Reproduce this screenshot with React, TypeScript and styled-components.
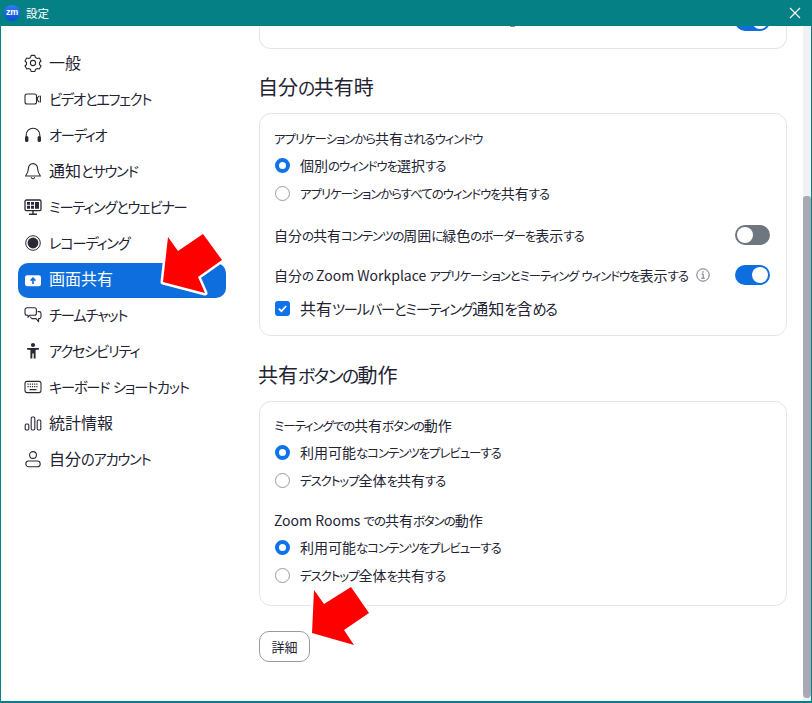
import React from "react";
import styled, { createGlobalStyle } from "styled-components";

const Global = createGlobalStyle`
  html, body { margin: 0; padding: 0; background: #fff; }
  body { font-family: "Noto Sans CJK JP", "Noto Sans", sans-serif; color: #232333; }
  * { box-sizing: border-box; }
`;

const Window = styled.div`
  position: relative;
  width: 812px;
  height: 703px;
  display: flex;
  flex-direction: column;
  background: #fff;
  border-left: 1px solid #058185;
  border-right: 1px solid #058185;
  border-bottom: 2px solid #058185;
  overflow: hidden;
`;

const TitleBar = styled.header`
  height: 26px;
  margin: 0 -1px;
  flex: none;
  background: #058185;
  display: flex;
  align-items: center;
  padding: 0 10px 0 4px;
  color: #fff;
`;

const Logo = styled.div`
  width: 16px;
  height: 16px;
  border-radius: 50%;
  background: linear-gradient(180deg, #2d7cf6, #0b4fd0);
  color: #fff;
  font: 700 9px/15px "Liberation Sans", sans-serif;
  text-align: center;
  letter-spacing: -0.3px;
`;

const TitleText = styled.span`
  margin-left: 6px;
  font-size: 11.5px;
  flex: 1;
`;

const Body = styled.div`
  flex: 1;
  min-height: 0;
  display: flex;
`;

const Sidebar = styled.nav`
  width: 258px;
  flex: none;
  padding: 19px 0 0 17px;
  display: flex;
  flex-direction: column;
`;

const NavRow = styled.div<{ $active?: boolean }>`
  width: 208px;
  height: ${(p) => (p.$active ? 35 : 36)}px;
  margin: ${(p) => (p.$active ? "2px 0 -1px" : "0")};
  display: flex;
  align-items: center;
  gap: 7px;
  padding-left: 6px;
  font-size: 16px;
  border-radius: 10px;
  color: ${(p) => (p.$active ? "#fff" : "#232333")};
  background: ${(p) => (p.$active ? "#0e6ede" : "transparent")};
  white-space: nowrap;
`;

const NavLabel = styled.span<{ $active?: boolean }>`
  padding-bottom: ${(p) => (p.$active ? 5 : 2)}px;
`;

const IconSlot = styled.span`
  width: 18px;
  height: 18px;
  display: flex;
  flex: none;
  color: #2a2a36;
`;

const Main = styled.main`
  flex: none;
  width: 528px;
`;

const ClippedCard = styled.div`
  height: 23px;
  border: 1px solid #e4e4ec;
  border-top: none;
  border-radius: 0 0 12px 12px;
  overflow: hidden;
  display: flex;
  justify-content: flex-end;
  padding-right: 16px;
  position: relative;
`;

const ClippedMark = styled.span`
  position: absolute;
  left: 250px;
  top: 0;
  width: 5px;
  height: 1px;
  background: #8a8a94;
`;

const ClippedToggle = styled.div`
  width: 35px;
  height: 20px;
  margin-top: -15px;
  border-radius: 10px;
  background: #0e6ede;
  position: relative;
  &::after {
    content: "";
    position: absolute;
    right: 2px;
    top: 2px;
    width: 16px;
    height: 16px;
    border-radius: 50%;
    background: #fff;
  }
`;

const Heading = styled.h2`
  margin: 0 0 0 -1px;
  font-size: 20px;
  font-weight: 400;
  line-height: 28px;
  color: #232333;
`;

const Section = styled.section<{ $top: number }>`
  margin-top: ${(p) => p.$top}px;
  display: flex;
  flex-direction: column;
  gap: 12px;
`;

const Card = styled.div<{ $padTop: number; $pad: number }>`
  border: 1px solid #e4e4ec;
  border-radius: 12px;
  padding: ${(p) => p.$padTop}px 16px ${(p) => p.$pad}px 14px;
  display: flex;
  flex-direction: column;
`;

const Label = styled.div<{ $top?: number }>`
  font-size: 14px;
  line-height: 20px;
  height: 20px;
  margin-top: ${(p) => p.$top ?? 0}px;
`;

const OptionRow = styled.div<{ $top?: number; $large?: boolean }>`
  display: flex;
  align-items: center;
  gap: 10px;
  font-size: ${(p) => (p.$large ? 16 : 14)}px;
  height: 20px;
  padding-left: 1px;
  margin-top: ${(p) => p.$top ?? 8}px;
  white-space: nowrap;
`;

const Radio = styled.span<{ $on?: boolean }>`
  width: 15px;
  height: 15px;
  flex: none;
  border-radius: 50%;
  background: #fff;
  border: ${(p) => (p.$on ? "4px solid #0e72ed" : "1px solid #9a9aa5")};
`;

const Check = styled.span`
  width: 15px;
  height: 15px;
  flex: none;
  border-radius: 3px;
  background: #0e72ed;
  display: flex;
  align-items: center;
  justify-content: center;
`;

const ToggleRow = styled.div<{ $top: number }>`
  display: flex;
  align-items: center;
  justify-content: space-between;
  height: 20px;
  margin-top: ${(p) => p.$top}px;
  font-size: 14px;
  white-space: nowrap;
`;

const ToggleLabel = styled.div`
  display: flex;
  align-items: center;
  gap: 8px;
`;

const Toggle = styled.span<{ $on?: boolean }>`
  width: 35px;
  height: 20px;
  flex: none;
  border-radius: 10px;
  background: ${(p) => (p.$on ? "#0e6ede" : "#6e7680")};
  position: relative;
  &::after {
    content: "";
    position: absolute;
    top: 2px;
    left: ${(p) => (p.$on ? "17px" : "2px")};
    width: 16px;
    height: 16px;
    border-radius: 50%;
    background: #fff;
  }
`;

const DetailButton = styled.button`
  display: block;
  margin-top: 25px;
  width: 51px;
  height: 31px;
  padding: 0;
  background: #fff;
  border: 1px solid #9a9aa5;
  border-radius: 10px;
  font: 400 13px "Noto Sans CJK JP", sans-serif;
  color: #232333;
`;

const ScrollTrack = styled.div`
  position: absolute;
  top: 26px;
  right: 0;
  bottom: 0;
  width: 8px;
  background: #f0f0f5;
`;

const ScrollThumb = styled.div`
  position: absolute;
  top: 170px;
  bottom: 3px;
  left: 0;
  right: 0;
  border-radius: 3px 3px 4px 4px;
  background: #a9a9b3;
`;

const Overlay = styled.svg`
  position: absolute;
  left: -1px;
  top: 0;
  width: 812px;
  height: 703px;
  pointer-events: none;
`;

const ArrowShape = styled.polygon`
  fill: #ff0000;
  stroke: #fff;
  stroke-width: 5px;
  stroke-linejoin: round;
  paint-order: stroke;
`;

const Kana = styled.span`
  font-feature-settings: "palt";
  font-size: 0.89em;
  letter-spacing: -0.085em;
`;

const Jp: React.FC<{ t: string }> = ({ t }) => (
  <>
    {t.split(/([\u3040-\u30ff]+)/).map((part, i) =>
      /[\u3040-\u30ff]/.test(part) ? <Kana key={i}>{part}</Kana> : <span key={i}>{part}</span>
    )}
  </>
);

const S = { fill: "none", stroke: "currentColor", strokeWidth: 1.1, strokeLinecap: "round", strokeLinejoin: "round" } as const;

const Ico: React.FC<{ children: React.ReactNode }> = ({ children }) => (
  <IconSlot>
    <svg width="18" height="18" viewBox="0 0 18 18">{children}</svg>
  </IconSlot>
);

const icons: Record<string, React.ReactNode> = {
  gear: (
    <g {...S}>
      <path d="M7.2 1.4h3.6l.6 2 1.9 1.1 2-.5 1.7 3-1.5 1.5 0 2 1.5 1.5-1.7 3-2-.5-1.9 1.1-.6 2H7.2l-.6-2-1.9-1.1-2 .5-1.7-3 1.5-1.5 0-2L1 7l1.7-3 2 .5 1.9-1.1z" />
      <circle cx="9" cy="9" r="2.6" />
    </g>
  ),
  video: (
    <g {...S}>
      <rect x="1" y="4" width="11.5" height="10" rx="2" />
      <path d="M15 6.2l-1.6 1.6v2.4l1.6 1.6M16.4 6v6" />
    </g>
  ),
  audio: (
    <g>
      <path d="M2.2 11V9a6.8 6.8 0 0 1 13.6 0v2" {...S} />
      <rect x="1" y="10" width="3.4" height="6" rx="1.6" fill="currentColor" />
      <rect x="13.6" y="10" width="3.4" height="6" rx="1.6" fill="currentColor" />
    </g>
  ),
  bell: (
    <g {...S}>
      <path d="M9 1.6c-2.9 0-4.6 2.2-4.6 5 0 3.4-1.1 5.2-2.8 7.4h14.8c-1.7-2.2-2.8-4-2.8-7.4 0-2.8-1.7-5-4.6-5z" />
      <path d="M7.4 15.6a1.7 1.7 0 0 0 3.2 0" />
    </g>
  ),
  meeting: (
    <g>
      <rect x="1" y="2" width="16" height="10.6" rx="1.4" fill="none" stroke="currentColor" strokeWidth="1.3" />
      <path d="M3 4h3v2.8H3zM7 4h3v2.8H7zM11 4h4v6.8h-4zM3 7.8h3v3H3zM7 7.8h3v3H7z" fill="currentColor" />
      <path d="M9 13v3M5 16.2h8" fill="none" stroke="currentColor" strokeWidth="1.4" />
    </g>
  ),
  record: (
    <g>
      <circle cx="9" cy="9" r="7.3" fill="none" stroke="currentColor" strokeWidth="1" />
      <circle cx="9" cy="9" r="5.4" fill="currentColor" />
    </g>
  ),
  share: (
    <g>
      <rect x="1" y="3.2" width="16" height="11" rx="2.2" fill="#fff" />
      <path d="M9 12V6.4M6.6 8.6L9 6.2l2.4 2.4" fill="none" stroke="#0e6ede" strokeWidth="1.6" />
    </g>
  ),
  chat: (
    <g {...S}>
      <path d="M3 1.8h7.4a2 2 0 0 1 2 2v3.4a2 2 0 0 1-2 2H6l-2 2V9.2H3a2 2 0 0 1-2-2V3.8a2 2 0 0 1 2-2z" />
      <path d="M14 5.6h1.2a1.8 1.8 0 0 1 1.8 1.8v3.4a1.8 1.8 0 0 1-1.8 1.8h-.6v3l-2.6-3H8.2A2 2 0 0 1 6.6 11" />
    </g>
  ),
  access: (
    <g fill="currentColor">
      <circle cx="9" cy="3" r="2.1" />
      <path d="M3 6h12v1.4l-3.4.7V16.6H9.7v-5.2H8.3v5.2H6.4V8.1L3 7.4z" />
    </g>
  ),
  keyboard: (
    <g>
      <rect x="1" y="3.4" width="16" height="11.2" rx="2" fill="none" stroke="currentColor" strokeWidth="1.1" />
      <path d="M3.5 6.2h11M3.5 8.6h11" stroke="currentColor" strokeWidth="1.3" strokeDasharray="1.2 1" fill="none" />
      <path d="M5.5 11.6h7" stroke="currentColor" strokeWidth="1.3" fill="none" />
    </g>
  ),
  stats: (
    <g {...S}>
      <rect x="1.2" y="10" width="3.6" height="6" rx="1.2" />
      <rect x="7.2" y="3" width="3.6" height="13" rx="1.2" />
      <rect x="13.2" y="6" width="3.6" height="10" rx="1.2" />
    </g>
  ),
  account: (
    <g {...S}>
      <circle cx="9" cy="5" r="3.4" />
      <rect x="1.8" y="11" width="14.4" height="5.8" rx="2.9" />
    </g>
  ),
};

const navItems = [
  ["gear", "一般"],
  ["video", "ビデオとエフェクト"],
  ["audio", "オーディオ"],
  ["bell", "通知とサウンド"],
  ["meeting", "ミーティングとウェビナー"],
  ["record", "レコーディング"],
  ["share", "画面共有"],
  ["chat", "チームチャット"],
  ["access", "アクセシビリティ"],
  ["keyboard", "キーボード ショートカット"],
  ["stats", "統計情報"],
  ["account", "自分のアカウント"],
];

const Radios: React.FC<{ a: string; b: string }> = ({ a, b }) => (
  <>
    <OptionRow $top={7}>
      <Radio $on />
      <span><Jp t={a} /></span>
    </OptionRow>
    <OptionRow>
      <Radio />
      <span><Jp t={b} /></span>
    </OptionRow>
  </>
);

export default function App() {
  return (
    <Window>
      <Global />
      <TitleBar>
        <Logo>zm</Logo>
        <TitleText>設定</TitleText>
        <svg width="14" height="14" viewBox="0 0 14 14">
          <path d="M2 2l10 10M12 2L2 12" stroke="#fff" strokeWidth="1.2" fill="none" />
        </svg>
      </TitleBar>
      <Body>
        <Sidebar>
          {navItems.map(([icon, text]) => (
            <NavRow key={icon} $active={icon === "share"}>
              <Ico>{icons[icon]}</Ico>
              <NavLabel $active={icon === "share"}><Jp t={text} /></NavLabel>
            </NavRow>
          ))}
        </Sidebar>
        <Main>
          <ClippedCard>
            <ClippedMark />
            <ClippedToggle />
          </ClippedCard>
          <Section $top={24}>
            <Heading><Jp t="自分の共有時" /></Heading>
            <Card $padTop={14} $pad={17}>
              <Label><Jp t="アプリケーションから共有されるウィンドウ" /></Label>
              <Radios a="個別のウィンドウを選択する" b="アプリケーションからすべてのウィンドウを共有する" />
              <ToggleRow $top={22}>
                <span><Jp t="自分の共有コンテンツの周囲に緑色のボーダーを表示する" /></span>
                <Toggle />
              </ToggleRow>
              <ToggleRow $top={20}>
                <ToggleLabel>
                  <span><Jp t="自分の Zoom Workplace アプリケーションとミーティング ウィンドウを表示する" /></span>
                  <svg width="14" height="14" viewBox="0 0 14 14">
                    <circle cx="7" cy="7" r="6.2" fill="none" stroke="#6e7680" strokeWidth="1" />
                    <path d="M5.6 6h1.6v4M5.2 10.2h3.6" fill="none" stroke="#6e7680" strokeWidth="1" />
                    <circle cx="7" cy="4" r="0.8" fill="#6e7680" />
                  </svg>
                </ToggleLabel>
                <Toggle $on />
              </ToggleRow>
              <OptionRow $top={13} $large>
                <Check>
                  <svg width="11" height="11" viewBox="0 0 11 11">
                    <path d="M1.8 5.6l2.6 2.6 4.8-5.2" fill="none" stroke="#fff" strokeWidth="1.7" />
                  </svg>
                </Check>
                <span><Jp t="共有ツールバーとミーティング通知を含める" /></span>
              </OptionRow>
            </Card>
          </Section>
          <Section $top={25}>
            <Heading><Jp t="共有ボタンの動作" /></Heading>
            <Card $padTop={13} $pad={20}>
              <Label><Jp t="ミーティングでの共有ボタンの動作" /></Label>
              <Radios a="利用可能なコンテンツをプレビューする" b="デスクトップ全体を共有する" />
              <Label $top={20}><Jp t="Zoom Rooms での共有ボタンの動作" /></Label>
              <Radios a="利用可能なコンテンツをプレビューする" b="デスクトップ全体を共有する" />
            </Card>
          </Section>
          <DetailButton>詳細</DetailButton>
        </Main>
      </Body>
      <ScrollTrack>
        <ScrollThumb />
      </ScrollTrack>
      <Overlay viewBox="0 0 812 703">
        <ArrowShape points="168,237 178,251 203,234 222,260 198,277 205,293 163,282" />
        <ArrowShape points="314,590 324,604 351,587 369,613 344,630 354,645 312,633" />
      </Overlay>
    </Window>
  );
}
